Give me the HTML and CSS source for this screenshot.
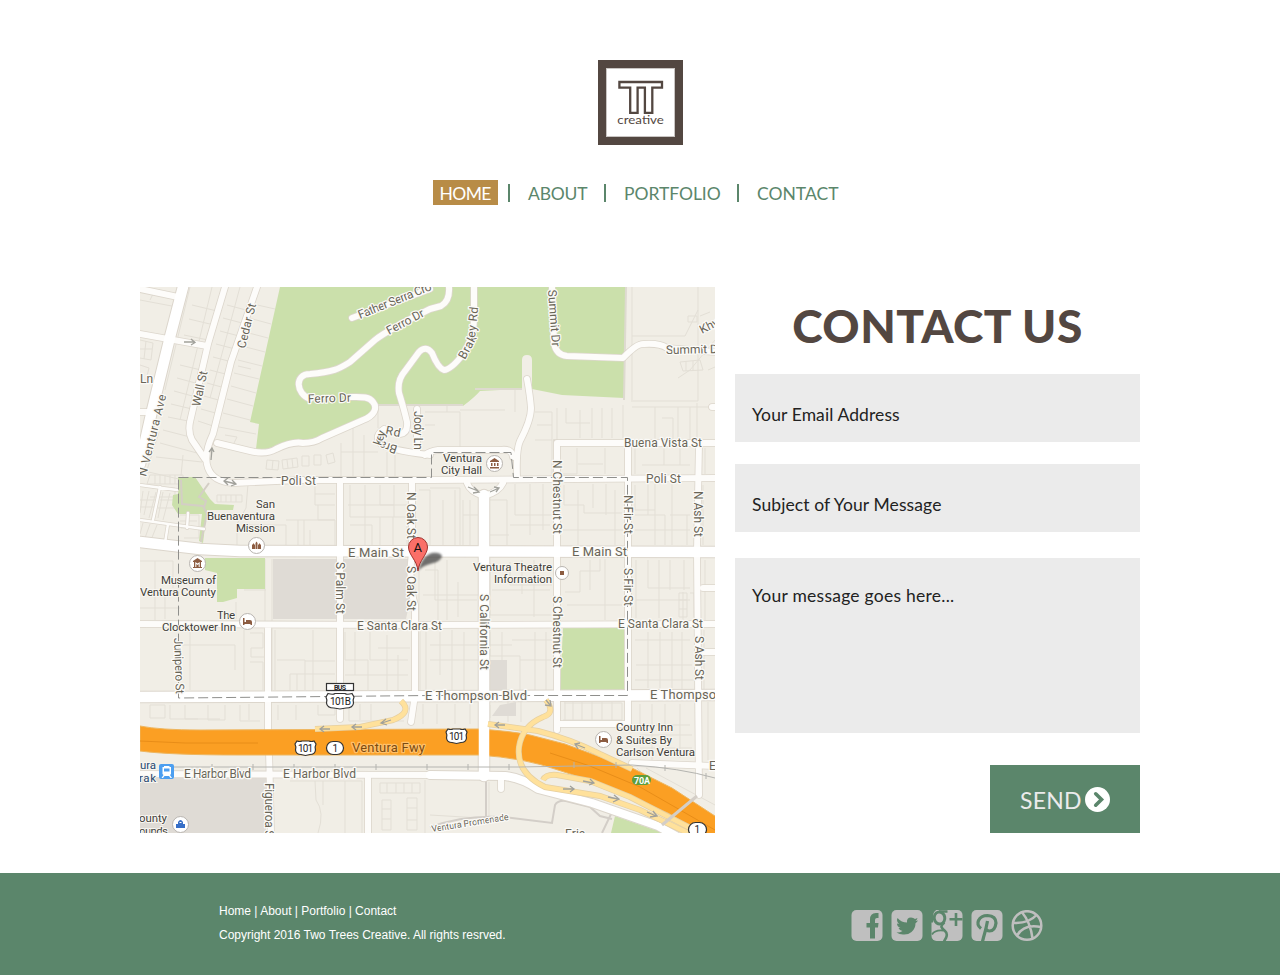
FILE: index.html
```html
<!DOCTYPE html>
<html lang="en">
<head>
<meta charset="utf-8">
<title>Two Trees Creative - Contact</title>
<link rel="stylesheet" href="styles.css">
</head>
<body>
<header class="header">
  <svg class="logo" viewBox="598 60 85 85" role="img" aria-label="TT creative">
    <rect class="logo-frame" x="602" y="64" width="77" height="77"/>
    <rect class="logo-edge" x="606.5" y="68.5" width="68" height="68"/>
    <path class="logo-tt" d="M619.4 82H662V87.6H652.3V112.8H644.9V87.6H637.6V112.8H630.2V87.6H619.4Z"/>
    <text class="logo-text" x="617.3" y="124.3" textLength="46.6" lengthAdjust="spacingAndGlyphs">creative</text>
  </svg>
  <nav class="nav">
    <a class="active">HOME</a><span class="bar"></span><a class="about">ABOUT</a><span class="bar"></span><a class="portfolio">PORTFOLIO</a><span class="bar"></span><a class="contact">CONTACT</a>
  </nav>
</header>
<main class="main">
  <svg class="map" viewBox="140 287 575 546">
    <defs>
      <g id="minor">
        <path d="M225 287 208 344 190 422Q188 432 192 440L205 459"/>
        <path d="M257 287 231 362 213 434Q203 455 208 468 213 482 234 483L300 480 430 480 715 478"/>
        <path d="M217 443 250 451Q266 455 276 449 292 441 303 443 314 443 322 438L363 420C374 416 378 408 373 402 369 396 360 397 350 397M310 399C296 394 294 374 310 374 335 372 340 368 350 362L375 340Q386 331 430 309L441 306Q450 301 449 287"/>
        <path d="M352 318 430 289"/>
        <path d="M474 287V315Q475 335 464 353 451 370 444 370 438 368 432 353 426 345 419 352L405 371Q397 380 399 393 404 409 407 422 408 433 400 434M384 429Q374 436 380 443 387 450 430 455"/>
        <path d="M417 409V452"/>
        <path d="M425 455Q430 451 438 450H500Q512 448 513 457"/>
        <path d="M552 287 554 343Q556 355 567 356L623 358Q637 343 644 344 660 343 667 348L715 352"/>
        <path d="M527 379Q530 395 531 408 531 420 520 441 516 450 517 478"/>
        <path d="M557 730V443H715M628 443V724H558M699 443 697 552 699 795"/>
        <path d="M340 480V719M412 480V552M412 552Q408 585 415 605V695L411 722"/>
        <path d="M140 624 420 625 715 624M268 625V730M269 750 271 833M368 777V833M501 776V789M632 763 715 766"/>
        <path d="M467 483Q470 492 484 496 499 492 503 483M712 407H715M703 588H715M703 652H715"/>
        <path d="M140 334 207 346M140 289 178 297M140 412H150"/>
        <path d="M140 774 435 775"/>
      </g>
      <g id="lane">
        <path d="M140 485 177 490M160 487 153 520M140 520 204 529M168 524 165 543M188 513 187 528"/>
      </g>
      <g id="major">
        <path d="M183 287 170 337 151 415 140 464"/>
        <path d="M140 542 200 549 240 551 715 552"/>
        <path d="M140 697 500 696 715 695"/>
        <path d="M484 495V776"/>
      </g>
      <path id="harbor" d="M430 775 505 776Q522 778 538 789L592 803 658 826 676 836"/>
      <g id="ramp">
        <path d="M315 729 360 727 393 720Q413 712 401 701"/>
        <path d="M488 724 538 731Q570 739 600 754L632 769"/>
        <path d="M546 700Q556 713 543 717 522 726 519 747 516 773 545 787L600 796 640 810 690 834"/>
        <path d="M543 780Q546 774 557 775L590 781 630 797 700 833"/>
      </g>
      <path id="highway" d="M140 726Q160 730 200 730L478 729Q510 731 530 735L565 744 592 754 632 768 672 788 718 818V842L702 834 692 827 668 813 625 794 592 781 558 770Q525 758 478 755H240Q170 755 140 751Z"/>
    </defs>
    <rect class="land" x="140" y="287" width="575" height="546"/>
    <g class="parcels">
      <path d="M190 287 165 390M212 287 180 420M240 287 210 398M192 305 217 311M189 319 214 325M184 335 208 340M180 365 201 370M177 378 199 384M174 391 196 397M171 404 192 409M168 417 188 421M163 430 190 437M160 443 197 453M156 457 202 462M227 305 246 310M223 318 242 323M220 331 239 336M216 344 235 349M213 357 232 362M210 370 229 375M207 383 225 388M204 396 222 401M201 409 219 414M198 421 216 427M253 304 275 309M249 318 271 324M245 332 268 338M242 346 265 352M238 360 262 366M234 373 259 379M231 386 256 393M227 399 253 406M223 413 250 420M219 427 256 434"/>
      <path d="M140 300 177 307M155 290 150 300M140 470 183 480M159 432 147 470M183 455 181 476M238 366 251 369M341 443V476M353 418V476M364 435V476M378 406V428M387 452V476M395 452V476M341 452H378"/>
      <path d="M425 412H460V448M447 404V412M425 425H435M460 410H505M515 390V412M535 412H552V476M537 425H552M535 440H552M557 408V440M566 408V423H590M580 410V438M592 408V438M602 408V438M612 408V438M623 405V438M632 287V400M697 403V438M655 407V440M662 418H673V440M678 407V440M690 407V440M632 407H715M632 336H685L698 310V287M631 401H698M698 310V401M678 378 690 370 715 340M708 370 715 367"/>
      <path d="M577 448V474H560M605 448V474M578 464H603M635 448V474M642 465H690M664 448V465M680 448V465M705 448V474"/>
      <path d="M248 484 246 508 237 524V545M315 485V505H335M315 494H335M318 505V520H335M286 520H335V545M298 520V545M304 520V545M310 530V545M245 525H286V545M350 485V517H407M365 485V545M380 485V505H407M394 485V517M348 505H394M350 525H372V545M380 517V545M393 517V545M407 517V545"/>
      <path d="M419 490H430V545M430 488H460V545M443 500V545M455 490V545M463 500V545M463 515H479M470 500V545M490 500H507V545M515 484V515H552M530 484V535M510 525H550M490 535H509M543 484V530M564 485V505H584V513H622M578 490V545M593 484V508M606 484V515M615 490V545M563 530H623M635 485V510H655M635 515H665V545M648 484V515M655 484V545M670 515H690M672 484V545M703 485V545M635 530H690M687 515V545"/>
      <path d="M140 561H173V588M155 561V620M165 595V619M265 559V621M272 559V690M140 608H180M244 590H266M236 602V619M419 560V620M425 570H438V620M435 560V600H477M447 560V620M458 582V617M423 595H478M490 563V615H552M510 562V585H552M522 560V594M534 560V617M550 590H492M565 592H580V571H600V559M567 605H622M590 560V590M605 559V620M636 560V618M648 560V588H690M659 560V618M670 560V590M684 560V590M636 600H690M683 592V620M705 560V620"/>
      <path d="M190 631V690M183 645H235V670M244 630V690M250 633H263V648H251V657H264M250 662H263V690M275 630V690M277 660H305V690M305 661H335M290 674H335M290 674V690M297 674V690M313 630V690M345 632V660H368V690M355 632V675M370 632V660H408M378 648H410M345 675H408M387 635V690M398 655V690M420 630V690M426 632V690M430 645H478M440 632V675M452 630V690M464 632V690M430 660H478M490 632V656H520V690M502 632V690M512 640H552M520 660H552M535 632V690M546 632V690M490 645H512M635 640H690M648 632V688M660 632V688M672 632V688M636 665H692M682 632V690M704 630V690M635 680H694"/>
      <path d="M150 705H165V718H150ZM170 705V719H220M185 705V719H198M208 705V720H225V705M240 705V721H260M249 704V720M278 705V720M296 705V720M318 705V715H335V703M349 703V721H404M360 704V720M371 704V720M423 704V724M437 704V724M455 704V724M470 704V724M490 705V718M508 702V722M521 702V722M565 702V720M573 702V720M582 702V720M592 702V720M602 702V720M612 702V720M564 703H622V720H563M640 704V725H690M652 704V763M665 704V725M680 704V758M640 735H692M640 748H692M708 702V760"/>
      <path d="M290 781H362V833M315 781 316 800Q325 812 318 833M323 781V805M345 781V833M380 783H420V793H380ZM387 783V793M396 783V793M404 783V793M412 783V793M382 800H391V830H382ZM382 809H391M382 819H391M407 798H417V830H407ZM407 808H417M407 820H417M425 780V833M430 815 480 818M489 782V818M637 768 700 830M637 785 680 820M646 768 715 805"/>
      <path d="M152 488H175V497H150M143 491 140 513M149 491 144 515M156 492 149 518M163 492 158 518M170 493 163 520M140 500H157M140 507H155M160 500H175M158 508H176M143 523 140 534M150 524 145 538M157 525 151 540M180 515H199V538H184M180 521H197M181 528H198M150 475H183V484H147ZM155 475V484M160 475V484M165 475V484M170 475V484M175 475V484M217 495H242V502H217ZM221 495V502M226 495V502M231 495V502M236 495V502M267 460 279 461 278 470 266 469ZM273 460 272 470M282 460 297 458 298 467 283 469ZM287 460 288 468M292 459 293 468M302 456H309V466H302ZM314 455H321V465H314ZM326 455 333 453 335 462 328 464ZM225 435 237 437 234 443M140 340 153 343 151 360 140 358M140 349H152M146 341 144 359M140 365 149 368 146 380M688 316H697V322H688ZM700 316 710 312M680 362 700 360 703 370 683 371ZM686 361V371M693 361V371M679 593H687V617H679ZM690 593H694V617M679 600H687M679 609H687"/>
    </g>
    <g class="park">
      <path d="M280 287H626L624 398 562 395 532 389V360Q532 355 527 355 522 355 522 360V389L480 391Q475 397 463 406L378 405 370 414 313 441 293 440 268 451 256 449 259 424 250 422Z"/>
      <path d="M178 477H195L210 499 215 504 234 505 233 510H207L203 543 199 541 202 514H178L172 505 173 495 178 494Z"/>
      <path d="M205 558H265V589H237V598L223 602H217V573L205 570Z"/>
      <path d="M563 628H624V690H560Z"/>
      <path d="M615 816 652 829 670 833H611Z"/>
    </g>
    <g class="block">
      <path d="M273 559H409V605L406 619H273ZM140 778H266V833H140ZM487 660H507V690H487ZM492 716 500 705 516 702V716Z"/>
    </g>
    <path class="park-edge" d="M626 287 624 400M378 405H463M522 389H475"/>
    <path class="trail" d="M181 480 182 504 203 506 207 514 201 542M209 483 199 497 206 501 204 508"/>
    <path class="service" d="M486 776V816M512 818 552 823 555 805Q558 800 566 801L590 807 600 816 612 819M612 812 602 833M430 827Q470 813 512 818"/>
    <use class="casing minor-casing" href="#minor"/><use class="casing lane-casing" href="#lane"/><use class="casing major-casing" href="#major"/><use class="casing harbor-casing" href="#harbor"/>
    <use class="road minor-road" href="#minor"/><use class="road lane-road" href="#lane"/>
    <use class="highway" href="#highway"/>
    <path class="freeway-line" d="M140 741 185 743H258M550 753 590 766 640 787 715 830"/>
    <use class="road major-road" href="#major"/><use class="road harbor-road" href="#harbor"/>
    <use class="ramp-casing" href="#ramp"/><use class="ramp" href="#ramp"/>
    <path class="bridge" d="M662 825 697 796"/>
    <path class="rail" d="M165 767H520L632 765Q680 768 715 778M212 764V770M253 764V770M294 764V770M335 764V770M376 764V770M427 764V770M468 764V770M509 764V770M574 762V768M616 762V768M665 765V771M706 773V779"/>
    <path class="boundary" d="M178.500 477.500H431.500V452.500H511L513.500 477.500H627.500V695.500L430 695.500 178.500 698V477.500"/>
    <g class="arrows">
      <path d="M184 342H195M191 339 195 342.500 191 345M211 460 212 449M209 452 212 448 214 452M224 481 236 484M228 478 224 481 228 485M232 480 236 484 231 486M330 729H320M324 726 320 729 324 732M362 727H352M356 724 352 727 356 730M391 720 382 723M386 719 381 723 387 725M468 487 478 491M474 487 479 492 473 493M490 492 499 488M494 487 499 488 496 492M505 725H495M499 722 495 725 499 728M585 748 575 744M580 743 575 744 578 749M583 781 593 783M590 779 594 783 589 785M563 789H574M570 786 574 789 570 792M608 797 618 799M614 795 619 799 613 802M647 812 656 816M653 811 657 816 650 817M546 700 550 705M545 705 551 706 550 700"/>
    </g>
    <g class="street">
      <text transform="translate(360 319) rotate(-22)" textLength="78">Father Serra Cro</text>
      <text transform="translate(389 335) rotate(-28)" textLength="41">Ferro Dr</text>
      <text transform="translate(308 403) rotate(-2)" textLength="43">Ferro Dr</text>
      <text transform="translate(245 349) rotate(-76)" textLength="46">Cedar St</text>
      <text transform="translate(200 407) rotate(-78)" textLength="36">Wall St</text>
      <text transform="translate(146 477) rotate(-76)" textLength="84">N Ventura Ave</text>
      <text x="140" y="383">Ln</text>
      <text transform="translate(465 360) rotate(-62)" textLength="25">Brak</text>
      <text transform="translate(475 338) rotate(-84)" textLength="31">ey Rd</text>
      <text transform="translate(548 290) rotate(86)" textLength="57">Summit Dr</text>
      <text transform="translate(666 354) rotate(-1)" textLength="56">Summit Dr</text>
      <text transform="translate(702 334) rotate(-27)">Khy</text>
      <text transform="translate(414 411) rotate(90)" textLength="39">Jody Ln</text>
      <text transform="translate(385 434) rotate(12)" textLength="15">Rd</text>
      <text transform="translate(398 446) rotate(198)" textLength="18">Bra</text>
      <text transform="translate(381 446) rotate(-72)" textLength="15">key</text>
      <text x="281" y="485" textLength="35">Poli St</text>
      <text x="646" y="483" textLength="35">Poli St</text>
      <text x="624" y="447" textLength="78">Buena Vista St</text>
      <text class="large" x="348" y="556.500" textLength="56">E Main St</text>
      <text class="large" x="572" y="555.500" textLength="55">E Main St</text>
      <text x="357" y="629.500" textLength="85">E Santa Clara St</text>
      <text x="618" y="628" textLength="85">E Santa Clara St</text>
      <text class="large" x="425" y="700" textLength="102">E Thompson Blvd</text>
      <text class="large" x="650" y="699" textLength="102">E Thompson Blvd</text>
      <text x="184" y="778" textLength="67">E Harbor Blvd</text>
      <text x="283" y="778" textLength="73">E Harbor Blvd</text>
      <text x="709" y="770">E</text>
      <text transform="translate(407 492) rotate(90)" textLength="47">N Oak St</text>
      <text transform="translate(407 566) rotate(90)" textLength="45">S Oak St</text>
      <text transform="translate(336 562) rotate(90)" textLength="52">S Palm St</text>
      <text transform="translate(174 638) rotate(88)" textLength="56">Junipero St</text>
      <text transform="translate(265 783) rotate(90)" textLength="58">Figueroa St</text>
      <text transform="translate(480 594) rotate(90)" textLength="76">S California St</text>
      <text transform="translate(553 460) rotate(90)" textLength="74">N Chestnut St</text>
      <text transform="translate(553 596) rotate(90)" textLength="72">S Chestnut St</text>
      <text transform="translate(624 495) rotate(90)" textLength="39">N Fir St</text>
      <text transform="translate(624 568) rotate(90)" textLength="38">S Fir St</text>
      <text transform="translate(694 491) rotate(90)" textLength="46">N Ash St</text>
      <text transform="translate(695 636) rotate(90)" textLength="44">S Ash St</text>
      <text class="small" transform="translate(432 832) rotate(-9)" textLength="78">Ventura Promenade</text>
      <text x="565" y="838">Erie</text>
      <text class="fwy" x="352" y="752" textLength="73">Ventura Fwy</text>
    </g>
    <g class="poi">
      <text x="256" y="508" textLength="19">San</text><text x="207" y="520" textLength="68">Buenaventura</text><text x="236" y="532" textLength="39">Mission</text>
      <text x="443" y="462" textLength="39">Ventura</text><text x="441" y="474" textLength="41">City Hall</text>
      <text x="161" y="584" textLength="55">Museum of</text><text x="140" y="596" textLength="76">Ventura County</text>
      <text x="217" y="619" textLength="18">The</text><text x="162" y="631" textLength="74">Clocktower Inn</text>
      <text x="473" y="571" textLength="79">Ventura Theatre</text><text x="494" y="583" textLength="58">Information</text>
      <text x="616" y="731" textLength="57">Country Inn</text><text x="616" y="744" textLength="56">&amp; Suites By</text><text x="616" y="756" textLength="79">Carlson Ventura</text>
      <text x="139" y="822" textLength="28">ounty</text><text x="139" y="835" textLength="29">ounds</text>
      <text class="station" x="140" y="769" textLength="16">ura</text><text class="station" x="139" y="782" textLength="17">rak</text>
    </g>
    <g class="pins">
      <circle cx="256.500" cy="545.500" r="8"/><circle cx="494.500" cy="463.500" r="8"/><circle cx="197.500" cy="563.500" r="8"/><circle cx="247.500" cy="621.500" r="8"/><circle cx="562" cy="573" r="6.500"/><circle cx="603.500" cy="739.500" r="8"/><circle cx="180.500" cy="824.500" r="8"/>
    </g>
    <g class="marks">
      <path d="M252 549V544.500H253V543.500H254V544.500H255V549ZM255.500 549V543L256.500 541.500 257.500 543V549ZM258 549V544.500H259V543.500H260V544.500H261V549Z"/>
      <path d="M490 461 494.500 458 499 461V462H490ZM491 463H492.500V466H491ZM494 463H495.500V466H494ZM497 463H498.500V466H497ZM490 467H499V468.500H490Z"/>
      <path d="M193 561 197.500 558 202 561V562H201V567H202V568H193V567H194V562H193ZM195.300 562V567H196.300V564L197.500 565 198.700 564V567H199.700V562L197.500 563.500Z"/>
      <path id="bed" d="M243 618H244.500V622H246V620H250Q252 620 252 622V625H250.500V624H244.500V625H243Z"/>
      <use href="#bed" x="356" y="118"/>
      <rect x="560" y="571" width="4" height="4"/>
      <path class="blue" d="M176 824H178V822Q180.500 818 183 822V824H185V828H176ZM179.500 823H181.500V822H179.500Z"/>
    </g>
    <g class="train"><rect x="159" y="764" width="15" height="15" rx="2"/><path d="M164 766H169.500V767H171V774L170 775 172 778H170.500L169 776H164.500L163 778H161.500L163.500 775 162.500 774V767H164ZM164 768.500V771.500H169.500V768.500Z"/></g>
    <g class="shields">
      <rect class="bus" x="326.500" y="683.500" width="27" height="7"/><text class="bus-text" x="334" y="690" textLength="12">BUS</text>
      <path d="M328 693.500Q333 695 335 693.500H345Q347 695 352 693.500L354 697Q352.500 700 353.500 703 353 708 346 708L340 709 334 708Q327 708 326.500 703 327.500 700 326 697Z"/><text x="330" y="705" textLength="21">101B</text>
      <path id="us" d="M297 741Q300 742 302 741H309Q311 742 314 741L316 744Q314.500 747 315.500 750 315 754.500 310 754.500L305.500 755.500 301 754.500Q296 754.500 295.500 750 296.500 747 295 744Z"/><use href="#us" x="151" y="-12"/>
      <text x="298" y="752" textLength="15">101</text><text x="449" y="740" textLength="15">101</text>
      <rect x="326.500" y="741.500" width="17" height="13" rx="6.500"/><text x="332.500" y="752">1</text>
      <rect x="688.500" y="822.500" width="18" height="14" rx="7"/><text x="694.500" y="833">1</text>
      <rect class="exit" x="632" y="775" width="19" height="10" rx="5"/><text class="exit-text" x="634" y="783.500" textLength="16">70A</text>
    </g>
    <path class="shadow" d="M418 571Q423 555 432 553 440 552 442 556 442 561 430 564 422 566 418 571Z"/>
    <path class="pin" d="M418 571C417 560 408.500 555 408.500 547A9.500 9.500 0 0 1 427.500 547C427.500 555 419 560 418 571Z"/>
    <text class="pin-text" x="413.500" y="552">A</text>
  </svg>
  <section class="form">
    <h1>CONTACT US</h1>
    <div class="field email"><span>Your Email Address</span></div>
    <div class="field subject"><span>Subject of Your Message</span></div>
    <div class="field message"><span>Your message goes here...</span></div>
    <button class="send"><span>SEND</span><svg viewBox="0 0 25 25"><circle cx="12.500" cy="12.500" r="12.500"/><path d="M10.700 6.800 16.500 12.500 10.700 18.200"/></svg></button>
  </section>
</main>
<footer class="footer">
  <div class="legal"><p>Home | About | Portfolio | Contact</p><p>Copyright 2016 Two Trees Creative. All rights resrved.</p></div>
  <div class="social">
    <svg viewBox="0 0.5 32 32"><rect x="0.500" y="0.500" width="31" height="31" rx="5"/><path class="cut" d="M19 29V18H15.500V13.500H19V10Q19 3.500 25 3.500H27.500V8.500H26Q24 8.500 24 10.500V13.500H27.500L27 18H24V29Z"/></svg>
    <svg viewBox="0 0.5 32 32"><rect x="0.500" y="0.500" width="31" height="31" rx="5"/><path class="cut" d="M6.500 8.500Q10.500 13 16 13 15.500 8 20 8 22.500 8 24 9.500L26.500 8.500Q26 10.500 24.500 11.500L27 11Q26 12.500 24.500 13.700 24.500 19 20.500 22.500 17 25.500 12 25 8.500 25 5.500 23 9.500 23 11.500 21.500 8.500 21 7.500 18.500H9.500Q6 17 6 14L8 14.500Q5 11.500 6.500 8.500Z"/></svg>
    <svg viewBox="0 0.5 32 32"><rect x="0.500" y="0.500" width="31" height="31" rx="5"/><ellipse class="g-ring" cx="8.500" cy="8.500" rx="5.300" ry="6" transform="rotate(-12 8.500 8.500)"/><path class="g-tail" d="M8 2H16.500M13.500 13Q10 15.500 10.500 17.500 11 19 14 21.500 17 24 15 28.500L13 32"/><path class="g-foot" d="M12.500 21Q4 20 1 25"/><path class="cut" d="M0 0H6Q2 2 2 7V13H0Z"/><path class="plus" d="M25 3.500V16.500M18.500 9.700H31.500"/></svg>
    <svg viewBox="0 0.5 32 32"><rect x="0.500" y="0.500" width="31" height="31" rx="5"/><path class="pin-cut" d="M10 19Q5.500 15.500 7.500 11 10 6 16.500 6 25 6.500 25 13.500 24 21.500 18.500 21.500 15.500 21.500 14.500 19"/><path class="pin-stem" d="M16.500 11.500Q15 20 12.500 28L11.500 32"/></svg>
    <svg viewBox="0 0.5 32 32"><path class="ball" d="M16 1.700A14.300 14.300 0 1 0 16 30.300 14.300 14.300 0 1 0 16 1.700ZM11 2.800Q19.500 13 21.500 29M2 13.500Q18 14 25.500 5.500M6 26Q13 14 30 17.500"/></svg>
  </div>
</footer>
</body>
</html>
```

FILE: styles.css
```css
* { box-sizing: border-box; }
body { margin: 0; background: #fff; font-family: Lato, sans-serif; width: 1280px; }
.header { height: 287px; padding-top: 60px; display: flex; flex-direction: column; align-items: center; }
.logo { width: 85px; height: 85px; display: block; }
.logo-frame { fill: #fff; stroke: #534741; stroke-width: 8; }
.logo-edge { fill: none; stroke: #c9c5c3; stroke-width: 1; }
.logo-tt { fill: #fff; stroke: #534741; stroke-width: 2.3; }
.logo-text { font: 11.8px Lato, sans-serif; fill: #534741; }
.nav { width: 414px; height: 25px; margin-top: 35px; display: flex; align-items: center; font-size: 17.5px; line-height: 27px; color: #5b866b; }
.nav a { white-space: nowrap; height: 25px; }
.nav .active { width: 65px; background: #b88c47; color: #fff; padding-left: 6.5px; letter-spacing: -.6px; }
.nav .bar { width: 2px; height: 18px; background: #5b866b; margin-left: 10px; margin-right: 18px; }
.nav .about { width: 59px; letter-spacing: -.2px; }
.nav .about + .bar, .nav .portfolio + .bar { margin-left: 17px; }
.nav .portfolio { width: 96px; letter-spacing: -.05px; }
.main { width: 1000px; height: 546px; margin: 0 auto; display: grid; grid-template-columns: 575px 405px; column-gap: 20px; }
.form { display: flex; flex-direction: column; }
h1 { margin: 12px 0 0; height: 75px; line-height: 54px; font-size: 46px; font-weight: 900; letter-spacing: .5px; text-align: center; color: #534741; white-space: nowrap; }
.field { background: #ebebeb; height: 68px; padding: 29px 17px 0; font-size: 17.5px; letter-spacing: .1px; line-height: 24px; color: #222; margin-bottom: 22px; }
.subject { margin-bottom: 26px; }
.message { height: 175px; padding-top: 26px; margin-bottom: 32px; letter-spacing: .25px; }
.send { width: 150px; height: 68px; margin: 0; padding: 2px 0 0 30px; border: 0; background: #5b866b; color: #ebebeb; align-self: flex-end; display: flex; align-items: center; font: 23px Lato, sans-serif; letter-spacing: .2px; }
.send span { width: 65px; text-align: left; }
.send svg { width: 25px; height: 25px; margin-bottom: 2px; }
.send circle { fill: #fff; }
.send path { fill: none; stroke: #5b866b; stroke-width: 3.6; stroke-linecap: round; }
.footer { margin-top: 40px; height: 102px; background: #5b866b; padding: 26px 237px 0 219px; display: flex; justify-content: space-between; }
.legal { font: 12px "Liberation Sans", sans-serif; color: #fff; }
.legal p { margin: 0; line-height: 24px; white-space: nowrap; }
.social { display: flex; gap: 8px; padding-top: 11px; }
.social svg { width: 32px; height: 32px; fill: #bfbfbf; }
.social .cut { fill: #5b866b; }
.social .g-ring, .social .g-tail, .social .g-foot { fill: none; stroke: #5b866b; stroke-width: 3; }
.social .g-tail { stroke-width: 2.6; }
.social .g-foot { stroke-width: 1.8; }
.social .plus { fill: none; stroke: #5b866b; stroke-width: 2.6; }
.social .pin-cut, .social .pin-stem { fill: none; stroke: #5b866b; stroke-width: 3.2; }
.social .ball { fill: none; stroke: #bfbfbf; stroke-width: 2.5; }

.map { display: block; width: 575px; height: 546px; overflow: hidden; font-family: Roboto, sans-serif; }
.land { fill: #f1eee6; }
.parcels, .trail, .service, .boundary, .rail, .arrows, .park-edge { fill: none; }
.parcels { stroke: #e3dfd6; stroke-width: 1; }
.park { fill: #cbe0ab; }
.park-edge { stroke: #dedad0; stroke-width: 2; }
.block { fill: #dfdbd5; }
.trail { stroke: #d4cec5; stroke-width: 2; }
.service { stroke: #d3cec8; stroke-width: 2; }
.casing { fill: none; stroke: #dcd6cc; stroke-linecap: round; }
.minor-casing { stroke-width: 7.6; }
.lane-casing { stroke-width: 4; }
.major-casing { stroke-width: 12.5; }
.harbor-casing { stroke-width: 10; }
.road { fill: none; stroke: #fdfcfa; stroke-linecap: round; stroke-linejoin: round; }
.minor-road { stroke-width: 6; }
.lane-road { stroke-width: 2.5; }
.major-road { stroke-width: 10.5; stroke: #fff; }
.harbor-road { stroke-width: 8; stroke: #fff; }
.highway { fill: #fb9f23; stroke: #eeb65f; stroke-width: 1; }
.freeway-line { fill: none; stroke: #e88d18; stroke-width: 1; }
.ramp-casing { fill: none; stroke: #e6cfa0; stroke-width: 6; }
.ramp { fill: none; stroke: #ffe19b; stroke-width: 4.6; }
.bridge { stroke: #d4cec7; stroke-width: 3; }
.rail { stroke: #b4b4b0; stroke-width: 1; }
.boundary { stroke: #8f8f8c; stroke-width: 1; stroke-dasharray: 10 4; }
.arrows { stroke: #a1a19b; stroke-width: 1.3; }
.street { font-size: 12px; fill: #696557; stroke: #fbfaf7; stroke-width: 2.5; paint-order: stroke; stroke-linejoin: round; }
.street .large { font-size: 13px; }
.street .small { font-size: 9px; }
.street .fwy { font-size: 13px; fill: #7b4a10; stroke: #ffc069; }
.poi { font-size: 11.5px; fill: #403d38; stroke: #f8f6f1; stroke-width: 2; paint-order: stroke; }
.poi .station { fill: #27486f; }
.pins { fill: #fff; stroke: #b9b5b0; stroke-width: 1; }
.marks { fill: #8c5c41; fill-rule: evenodd; }
.marks .blue { fill: #376fc7; }
.train rect { fill: #4d9ff0; }
.train path { fill: #fff; fill-rule: evenodd; }
.shields { fill: #fff; stroke: #333; stroke-width: 1.2; }
.shields text { font-size: 10px; fill: #222; stroke: none; }
.shields .bus-text { font-size: 7px; font-weight: bold; }
.shields .exit { fill: #5c9e3e; stroke: none; }
.shields .exit-text { fill: #fff; font-size: 9px; font-weight: bold; }
.shadow { fill: #444; opacity: .75; filter: blur(1px); }
.pin { fill: #fa6f68; stroke: #9f332e; stroke-width: 1; }
.pin-text { font: 13px Roboto, sans-serif; fill: #111; }
```
